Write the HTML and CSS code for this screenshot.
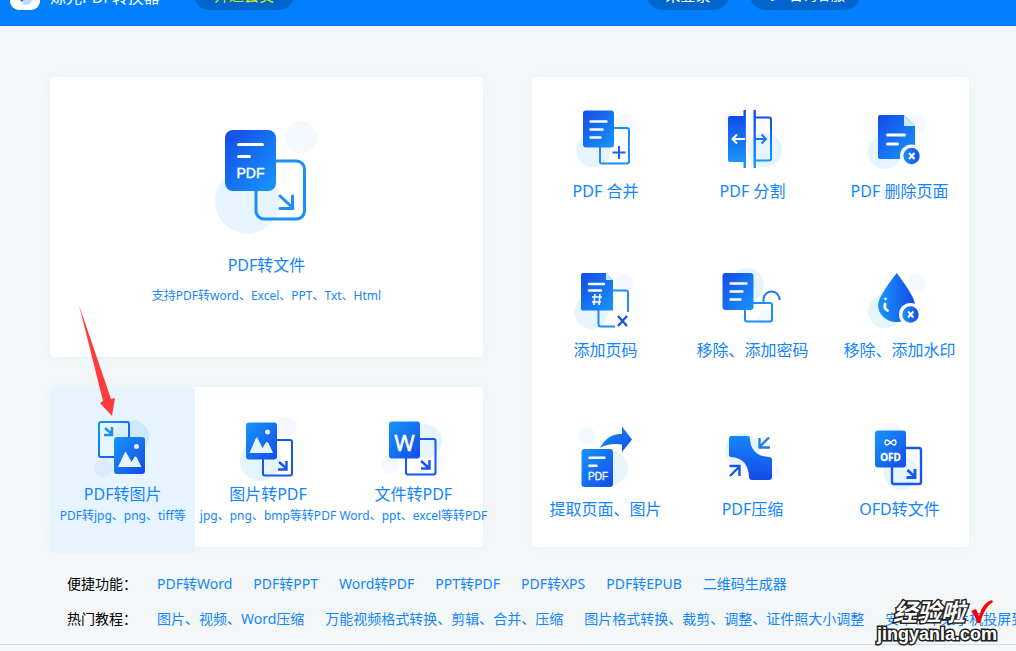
FILE: index.html
```
<!DOCTYPE html>
<html lang="zh-CN">
<head>
<meta charset="utf-8">
<title>PDF转换器</title>
<link rel="stylesheet" href="styles.css">
</head>
<body>
<svg class="defs" aria-hidden="true">
  <defs>
    <linearGradient id="dl" x1="0" y1="0" x2="1" y2="1"><stop offset="0" stop-color="#144be8"/><stop offset="1" stop-color="#1796fb"/></linearGradient>
    <linearGradient id="ld" x1="0" y1="0" x2="1" y2="1"><stop offset="0" stop-color="#1796fb"/><stop offset="1" stop-color="#144be8"/></linearGradient>
    <linearGradient id="v" x1="0" y1="0" x2="0" y2="1"><stop offset="0" stop-color="#144be8"/><stop offset="1" stop-color="#1796fb"/></linearGradient>
    <linearGradient id="h" x1="0" y1="0" x2="1" y2="0"><stop offset="0" stop-color="#1796fb"/><stop offset="1" stop-color="#144be8"/></linearGradient>
  </defs>
</svg>
<header class="bar">
  <svg class="logo" width="30" height="30" viewBox="0 0 30 30"><rect width="30" height="30" rx="9" fill="#fff"/><path d="M8 8h7v14q-7 0-7-7z" fill="#2463f5"/><path d="M13 11h9v7q0 7-7 7h-2z" fill="#b9dcff"/></svg>
  <span class="brand">烁光PDF转换器</span>
  <button class="pill vip">开通会员</button>
  <span class="spacer"></span>
  <button class="pill login">未登录</button>
  <button class="pill service"><svg width="12" height="12" viewBox="0 0 12 12"><path d="M1 8V5a5 5 0 0 1 10 0v3M1 6v3h2M10 8q0 3-4 3" fill="none" stroke="#fff" stroke-width="2"/></svg>咨询客服</button>
</header>

<main class="board">
  <div class="left">
    <a class="card hero" href="#">
      <svg width="113" height="125" viewBox="210 115 113 125">
        <circle cx="247.500" cy="201" r="32.500" fill="#e6f4ff"/><circle cx="301" cy="137" r="16" fill="#f4f8ff"/>
        <rect x="256" y="161" width="48.500" height="58" rx="8" fill="none" stroke="#1b8efa" stroke-width="3"/>
        <path d="M280 196l13 12M292.500 196v12.500H280" fill="none" stroke="#1b8efa" stroke-width="3" stroke-linecap="round"/>
        <rect x="225" y="130" width="51" height="61" rx="8" fill="url(#dl)"/>
        <path d="M238.500 144.500h24M238.500 156.500h11" stroke="#fff" stroke-width="3" stroke-linecap="round"/>
        <text x="250.500" y="178" class="t14">PDF</text>
      </svg>
      <span class="name">PDF转文件</span>
      <span class="note">支持PDF转word、Excel、PPT、Txt、Html</span>
    </a>
    <div class="card trio">
      <a class="cell active" href="#">
        <svg width="70" height="70" viewBox="88 412 70 70">
          <circle cx="132" cy="437" r="17" fill="#cde9ff"/><circle cx="103" cy="468" r="9" fill="#dbeafe"/>
          <rect x="99" y="422" width="30" height="35" rx="2" fill="#e6f4ff" fill-opacity=".5" stroke="url(#ld)" stroke-width="2"/>
          <path d="M105 428l7 6M112 427v8h-8" fill="none" stroke="#188ffa" stroke-width="2.400"/>
          <rect x="114" y="437" width="31" height="37" rx="3" fill="url(#ld)"/><circle cx="136.500" cy="446.500" r="2.500" fill="#e6f4ff"/>
          <path d="M118 467l6.500-14q1-2 2 0l5 9 3-5q1-1 2 0l5 10z" fill="#e6f4ff"/>
        </svg>
        <span class="name">PDF转图片</span><span class="note">PDF转jpg、png、tiff等</span>
      </a>
      <a class="cell" href="#">
        <svg width="70" height="70" viewBox="233 412 70 70">
          <circle cx="260.500" cy="460.500" r="20.500" fill="#e6f4ff"/><circle cx="286" cy="426.500" r="10" fill="#f4f8ff"/>
          <rect x="263" y="440" width="29" height="35.500" rx="2" fill="none" stroke="#1656ee" stroke-width="2"/>
          <path d="M279 462l7 6M286.500 461v8.500H278" fill="none" stroke="#1656ee" stroke-width="2.400"/>
          <rect x="246" y="422.500" width="31" height="37" rx="3" fill="url(#ld)"/><circle cx="267.500" cy="432" r="2.500" fill="#e6f4ff"/>
          <path d="M249.500 453l6-14q1-3 2.500 0l4.500 9 3-5q1.500-2 3 0l4.500 10z" fill="#e6f4ff"/>
        </svg>
        <span class="name">图片转PDF</span><span class="note">jpg、png、bmp等转PDF</span>
      </a>
      <a class="cell" href="#">
        <svg width="70" height="70" viewBox="379 412 70 70">
          <circle cx="426" cy="441" r="17" fill="#e6f4ff"/><circle cx="391" cy="464.500" r="9" fill="#f4f8ff"/>
          <rect x="407" y="439" width="29.500" height="35.500" rx="2" fill="none" stroke="#1656ee" stroke-width="2"/>
          <path d="M422 461l8 7M430.500 460v8.500H422" fill="none" stroke="#1656ee" stroke-width="2.400"/>
          <rect x="390" y="421.500" width="31" height="37" rx="3" fill="url(#ld)"/>
          <text x="405.500" y="451" class="t22">W</text>
        </svg>
        <span class="name">文件转PDF</span><span class="note">Word、ppt、excel等转PDF</span>
      </a>
    </div>
  </div>

  <div class="card tools">
    <a class="cell" href="#">
      <svg width="71" height="70" viewBox="570 104 71 70">
        <circle cx="593" cy="150" r="17" fill="#e6f4ff"/><circle cx="625" cy="122.500" r="9" fill="#f4f8ff"/>
        <rect x="600" y="128" width="29" height="35.500" rx="2" fill="none" stroke="#1b8efa" stroke-width="2"/>
        <path d="M619 146v13M612.500 152.500h13" stroke="#1d63e8" stroke-width="2"/>
        <rect x="583" y="110.500" width="31" height="37" rx="3" fill="url(#dl)"/>
        <path d="M590.500 121.500h16M590.500 129.500h12M590.500 137.500h10" stroke="#fff" stroke-width="2.400" stroke-linecap="round"/>
      </svg><span class="name">PDF 合并</span>
    </a>
    <a class="cell" href="#">
      <svg width="71" height="70" viewBox="717 104 71 70">
        <circle cx="765" cy="150" r="17" fill="#e6f4ff"/><circle cx="731" cy="122" r="9" fill="#f4f8ff"/>
        <path d="M745 116h-15q-2 0-2 2v42q0 2 2 2h15z" fill="url(#v)"/>
        <path d="M743.500 110h2.400v58h-2.400zM753.500 110h2.400v58h-2.400z" fill="url(#v)"/>
        <path d="M755 117.500h14q2 0 2 2v39q0 2-2 2h-14" fill="none" stroke="url(#v)" stroke-width="2"/>
        <path d="M745 139h-12M737 134.500l-4.500 4.500 4.500 4.500" fill="none" stroke="#fff" stroke-width="2"/>
        <path d="M755 139h11M761.500 134.500l4.500 4.500-4.500 4.500" fill="none" stroke="#1875f3" stroke-width="2"/>
      </svg><span class="name">PDF 分割</span>
    </a>
    <a class="cell" href="#">
      <svg width="71" height="70" viewBox="864 104 71 70">
        <circle cx="885" cy="152" r="17" fill="#e6f4ff"/><circle cx="917" cy="124" r="9" fill="#f4f8ff"/>
        <path d="M880 115h24l11 11v33h-35q-2 0-2-2v-40q0-2 2-2z" fill="url(#dl)"/><path d="M904 115l11 11h-11z" fill="#c3edff"/>
        <path d="M887.500 135h17M887.500 144h10" stroke="#fff" stroke-width="3" stroke-linecap="round"/>
        <circle cx="911.500" cy="156" r="11.500" fill="#fff"/><circle cx="911.500" cy="156" r="8.200" fill="url(#h)"/>
        <path d="M909 153l5.500 6M914.500 153l-5.500 6" stroke="#fff" stroke-width="2"/>
      </svg><span class="name">PDF 删除页面</span>
    </a>
    <a class="cell" href="#">
      <svg width="71" height="70" viewBox="570 263 71 70">
        <circle cx="591.500" cy="312" r="17" fill="#e6f4ff"/><circle cx="624" cy="283" r="9" fill="#f4f8ff"/>
        <path d="M612 290.500h14q2 0 2 2V312M598.500 310v14q0 2.500 2.500 2.500h14" fill="none" stroke="#1b8efa" stroke-width="2"/>
        <path d="M618 316l9 10M627 316l-9 10" stroke="#1656e0" stroke-width="2.400"/>
        <path d="M583 273h23l7 7v30.500h-30q-2 0-2-2V275q0-2 2-2z" fill="url(#dl)"/><path d="M606 273l7 7h-7z" fill="#c3edff"/>
        <path d="M589 284h15M589 290.500h12" stroke="#fff" stroke-width="2.400" stroke-linecap="round"/>
        <path d="M595 294l-1 11M600 294l-1 11M592 297h10M592 302h9" stroke="#fff" stroke-width="1.600"/>
      </svg><span class="name">添加页码</span>
    </a>
    <a class="cell" href="#">
      <svg width="71" height="70" viewBox="717 263 71 70">
        <circle cx="747" cy="285" r="17" fill="#e6f4ff"/><circle cx="766" cy="319" r="9" fill="#f4f8ff"/>
        <rect x="745" y="303" width="27" height="18.500" rx="2" fill="none" stroke="#1b8efa" stroke-width="2"/>
        <path d="M763.500 303v-4a8 8 0 0 1 16 1" fill="none" stroke="#1b80f5" stroke-width="2"/>
        <rect x="722.500" y="273" width="31" height="37" rx="3" fill="url(#dl)"/>
        <path d="M730.500 283.500h16M730.500 291.500h12M730.500 299.500h10" stroke="#fff" stroke-width="2.400" stroke-linecap="round"/>
      </svg><span class="name">移除、添加密码</span>
    </a>
    <a class="cell" href="#">
      <svg width="71" height="70" viewBox="864 263 71 70">
        <circle cx="885" cy="311" r="17" fill="#e6f4ff"/><circle cx="917" cy="283" r="9" fill="#f4f8ff"/>
        <path d="M896.700 273q18.300 24 18.300 32a18.500 17 0 0 1-37 0q0-8 18.700-32z" fill="url(#h)"/>
        <path d="M885 304q-1 5 2.500 6.500" fill="none" stroke="#fff" stroke-width="2.800" stroke-linecap="round"/><circle cx="885.500" cy="299" r="1.400" fill="#fff"/>
        <circle cx="910.500" cy="314.500" r="11.500" fill="#fff"/><circle cx="910.500" cy="314.500" r="8.200" fill="url(#h)"/>
        <path d="M908 311.500l5.500 6M913.500 311.500l-5.500 6" stroke="#fff" stroke-width="2"/>
      </svg><span class="name">移除、添加水印</span>
    </a>
    <a class="cell" href="#">
      <svg width="71" height="70" viewBox="570 422 71 70">
        <circle cx="611" cy="468" r="17" fill="#e6f4ff"/><circle cx="586.500" cy="436" r="9" fill="#f4f8ff"/>
        <path d="M600 448q8-15 22-14v-7.500l10 13-10 12.500v-7.500q-13-2-22 3.500z" fill="url(#ld)"/>
        <rect x="581.500" y="449" width="31.500" height="38" rx="3" fill="url(#ld)"/>
        <path d="M589.500 457.700h15M589.500 465.700h7" stroke="#fff" stroke-width="2.400" stroke-linecap="round"/>
        <text x="598" y="480" class="t10">PDF</text>
      </svg><span class="name">提取页面、图片</span>
    </a>
    <a class="cell" href="#">
      <svg width="71" height="70" viewBox="717 422 71 70">
        <circle cx="742" cy="450" r="17" fill="#e6f4ff"/><circle cx="771" cy="471.500" r="9" fill="#f4f8ff"/>
        <path d="M731 436h16q3 0 3 3 1 17 19 18 3 0 3 3v17q0 3-3 3h-17q-3 0-3-3-1-19-18-20-2 0-2-2v-16q0-3 2-3z" fill="url(#v2)"/>
        <linearGradient id="v2" x1="0" y1="0" x2="0" y2="1"><stop offset="0" stop-color="#1785fb"/><stop offset="1" stop-color="#144be8"/></linearGradient>
        <path d="M769 437.500l-9 9M759.500 438v9.500H770" fill="none" stroke="#1b7ef6" stroke-width="2.400"/>
        <path d="M730 476l9-9M729.500 466h10v10" fill="none" stroke="#1656e0" stroke-width="2.400"/>
      </svg><span class="name">PDF压缩</span>
    </a>
    <a class="cell" href="#">
      <svg width="71" height="70" viewBox="864 422 71 70">
        <circle cx="901" cy="473" r="17" fill="#e6f4ff"/><circle cx="892" cy="431" r="9" fill="#f4f8ff"/>
        <rect x="892" y="448" width="29" height="36" rx="2" fill="none" stroke="#1858ef" stroke-width="2.400"/>
        <path d="M907.500 470l7 6.500M915 469v8.500h-8.500" fill="none" stroke="#1656ee" stroke-width="2.800"/>
        <rect x="875" y="430.500" width="31" height="37" rx="3" fill="url(#ld)"/>
        <path d="M890.500 442.500q-5-5-5.500 0 .500 5 5.500 0t5.500 0q-.500 5-5.500 0" fill="none" stroke="#fff" stroke-width="1.300"/>
        <text x="890.500" y="461" class="t10 b">OFD</text>
      </svg><span class="name">OFD转文件</span>
    </a>
  </div>
</main>

<footer class="links">
  <nav class="row"><span class="label">便捷功能：</span>
    <a href="#">PDF转Word</a><a href="#">PDF转PPT</a><a href="#">Word转PDF</a><a href="#">PPT转PDF</a><a href="#">PDF转XPS</a><a href="#">PDF转EPUB</a><a href="#">二维码生成器</a></nav>
  <nav class="row"><span class="label">热门教程：</span>
    <a href="#">图片、视频、Word压缩</a><a href="#">万能视频格式转换、剪辑、合并、压缩</a><a href="#">图片格式转换、裁剪、调整、证件照大小调整</a><a href="#">安卓、苹果手机投屏到电脑</a></nav>
</footer>

<svg class="arrow" width="50" height="116" viewBox="76 303 50 116"><path d="M79 305L103 401l-3 2 12 13 3-18-4 1z" fill="#ff3b3b"/></svg>
<div class="stamp"><span class="cn">经验啦</span><svg class="tick" width="26" height="26" viewBox="0 0 26 26"><path d="M2 12l5-2 3 7Q14 3 23 1l1 2Q16 7 11 24H8Q6 16 2 12z" fill="#f00"/></svg><span class="en">jingyanla.com</span></div>
</body>
</html>
```
FILE: styles.css
```
* { box-sizing: border-box; }
body {
  margin: 0;
  background: #f3f7f8;
  font-family: "Noto Sans", "Noto Sans CJK SC", sans-serif;
  color: #000;
  position: relative;
  min-height: 100vh;
  overflow: hidden;
}
a { color: #1285ff; text-decoration: none; }
svg { display: block; }
.defs { position: absolute; width: 0; height: 0; }

.bar {
  height: 26px;
  padding: 0 156px 16px 10px;
  background: #0080ff;
  display: flex;
  align-items: flex-end;
  overflow: hidden;
}
.logo { flex: none; }
.brand { margin-left: 10px; width: 144px; color: #fff; font-size: 16px; line-height: 26px; white-space: nowrap; }
.spacer { flex: 1; }
.pill {
  height: 30px;
  border: 0;
  border-radius: 15px;
  background: #0066cc;
  color: #fff;
  font: 15px/30px "Noto Sans", "Noto Sans CJK SC", sans-serif;
  display: flex;
  align-items: center;
  justify-content: center;
  gap: 12px;
  padding: 0;
  white-space: nowrap;
}
.vip { width: 100px; color: #d8f000; }
.login { width: 82px; margin-right: 21px; }
.service { width: 110px; font-size: 14px; }

.board {
  display: grid;
  grid-template-columns: 433fr 437fr;
  column-gap: 49px;
  padding: 51px 47px 0 50px;
}
.left { display: flex; flex-direction: column; gap: 30px; }
.card { background: #fff; border-radius: 4px; box-shadow: 0 0 12px rgba(60, 110, 130, .03); }
.hero, .cell { display: flex; flex-direction: column; align-items: center; white-space: nowrap; }
.hero { padding: 38px 0 52px; }
.hero .name { margin: 13px 0 10px; }
.name { font-size: 16px; line-height: 24px; }
.note { font-size: 12px; line-height: 18px; }

.trio { display: grid; grid-template-columns: repeat(3, calc(100% / 3 + 1px)); height: 160px; }
.trio .cell { padding-top: 25px; }
.trio .name { margin-bottom: 1px; }
.trio .active { background: #e6f4ff; border-radius: 4px; height: 166px; }

.tools {
  display: grid;
  grid-template-columns: repeat(3, 1fr);
  gap: 60px 34px;
  padding: 27px 13px 26px 17px;
}
.tools .name { margin-top: 5px; }

.t14, .t22, .t10 { fill: #fff; text-anchor: middle; font-family: "Liberation Sans", sans-serif; }
.t14 { font-size: 14px; stroke: #fff; stroke-width: .4px; }
.t22 { font: 22px "Noto Sans", sans-serif; stroke: #fff; stroke-width: .5px; }
.t10 { font-size: 10px; stroke: #fff; stroke-width: .3px; }
.b { font: bold 10px "Noto Sans", sans-serif; }

.links { padding: 25px 0 13px 67px; border-bottom: 1px solid #d9d9de; display: flex; flex-direction: column; gap: 11px; }
.row { display: flex; gap: 21px; font-size: 14px; line-height: 24px; white-space: nowrap; }
.label { width: 69px; }

.arrow { position: absolute; left: 76px; top: 303px; }
.stamp {
  position: absolute;
  right: 13px;
  top: 599px;
  width: 126px;
  display: grid;
  grid-template-columns: 92px 26px;
  color: #fff;
  font-weight: bold;
  paint-order: stroke fill;
  -webkit-text-stroke: 3px #222;
}
.cn { font-size: 24px; line-height: 25px; font-style: italic; padding-left: 16px; white-space: nowrap; }
.en { grid-column: 1 / 3; font: bold 18px/18px "Liberation Sans", sans-serif; }
```
